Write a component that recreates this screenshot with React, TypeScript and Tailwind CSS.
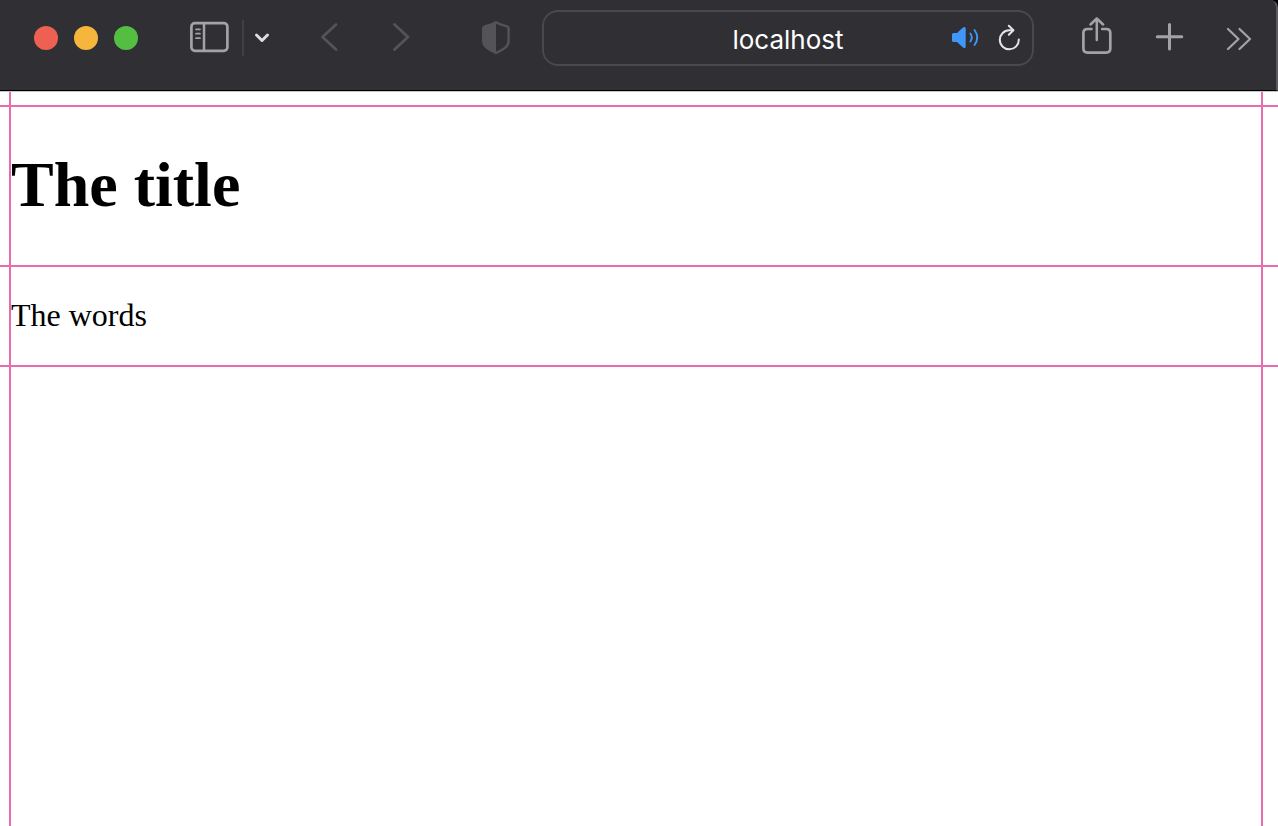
import React from "react";

type IconButtonProps = {
  label: string;
  className?: string;
  children?: React.ReactNode;
};

function IconButton({ label, className = "", children }: IconButtonProps) {
  return (
    <button type="button" aria-label={label} className={`shrink-0 ${className}`}>
      {children}
    </button>
  );
}

const line = {
  fill: "none",
  stroke: "currentColor",
  strokeLinecap: "round" as const,
  strokeLinejoin: "round" as const,
};

function Toolbar() {
  return (
    <header className="flex items-start rounded-tr-lg border-r-2 border-b border-r-[#5b5b5e] border-b-black bg-[#302f34] pt-[10px] pb-6 pl-[34px] text-[#a3a2a7]">
      <div className="flex h-14 shrink-0 items-center gap-4">
        <IconButton label="Close" className="size-6 rounded-full bg-[#ee6152]" />
        <IconButton label="Minimize" className="size-6 rounded-full bg-[#f6b63d]" />
        <IconButton label="Zoom" className="size-6 rounded-full bg-[#54be43]" />
      </div>

      <div className="ml-12 flex h-14 shrink-0 items-center">
        <IconButton label="Show sidebar" className="px-1">
          <svg width="40" height="36" viewBox="0 0 40 36" {...line}>
            <rect x="1.4" y="3.2" width="36" height="27.600" rx="3.500" strokeWidth="2.700" />
            <path d="M14 4v26.500" strokeWidth="2.500" />
            <path d="M6 9.300h4M6 13.700h4M6 18.200h4" strokeWidth="1.700" />
          </svg>
        </IconButton>
        <div className="ml-2 h-9 w-[2px] bg-[#414045]" />
        <IconButton label="Tab groups" className="px-2">
          <svg width="20" height="20" viewBox="0 0 20 20" className="text-[#dddce0]" {...line}>
            <path d="M4.500 7l5.500 5.500l5.500-5.500" strokeWidth="3" />
          </svg>
        </IconButton>
      </div>

      <div className="ml-9 flex h-14 shrink-0 items-center gap-10 text-[#545358]">
        <IconButton label="Back">
          <svg width="32" height="32" viewBox="0 0 32 32" {...line}>
            <path d="M20 2.500L6.500 15L20 27.500" strokeWidth="2.800" />
          </svg>
        </IconButton>
        <IconButton label="Forward">
          <svg width="32" height="32" viewBox="0 0 32 32" {...line}>
            <path d="M6.500 2.500L20 15L6.500 27.500" strokeWidth="2.800" />
          </svg>
        </IconButton>
      </div>

      <div className="ml-[62px] flex h-14 shrink-0 items-center text-[#545358]">
        <IconButton label="Privacy report">
          <svg width="28" height="36" viewBox="0 0 28 36" {...line}>
            <path d="M14 2.200C10 4.800 6 5.500 2.500 6.500Q1.200 7 1.200 8.500V21C1.200 27 7 29.500 14 33C21 29.500 26.600 27 26.600 21V8.500Q26.600 7 25.300 6.500C22 5.500 18 4.800 14 2.200Z" strokeWidth="2.400" />
            <path d="M14 2.200C10 4.800 6 5.500 2.500 6.500Q1.200 7 1.200 8.500V21C1.200 27 7 29.500 14 33Z" fill="currentColor" stroke="none" />
          </svg>
        </IconButton>
      </div>

      <div className="ml-8 flex h-14 min-w-0 flex-1 items-center rounded-2xl border-2 border-[#49484d]">
        <div className="w-20 shrink-0" />
        <input
          type="text"
          aria-label="Address"
          defaultValue="localhost"
          className="h-full min-w-0 flex-1 bg-transparent pt-[2px] text-center font-['Inter','Liberation_Sans',sans-serif] text-[26px] leading-8 text-white outline-none"
        />
        <div className="flex w-20 shrink-0 items-center justify-end gap-4 pr-[10px]">
          <IconButton label="Mute tab">
            <svg width="32" height="28" viewBox="0 0 32 28" className="text-[#3f97fa]" {...line}>
              <path d="M3.500 9H7L13 3.600Q15.700 2 15.700 4.500V22.500Q15.700 25 13 23.400L7 18H3.500Q2 18 2 16.500V10.500Q2 9 3.500 9Z" fill="currentColor" stroke="none" />
              <path d="M20.300 9.500Q23.300 13.500 20.300 17.500M24.500 6Q30 13.500 24.500 21" strokeWidth="1.800" />
            </svg>
          </IconButton>
          <IconButton label="Reload">
            <svg width="24" height="28" viewBox="0 0 24 28" className="text-[#e4e4e6]" {...line}>
              <path d="M15.200 6.300H11.200A9.500 9.500 0 1 0 20.800 15.500" strokeWidth="2" />
              <path d="M10.800 1.800L15.400 6.300L10.800 10.800" strokeWidth="2" />
            </svg>
          </IconButton>
        </div>
      </div>

      <div className="ml-12 flex h-14 shrink-0 items-center gap-10 pr-6">
        <IconButton label="Share">
          <svg width="32" height="42" viewBox="0 0 32 42" {...line}>
            <path d="M9.500 12H5.500Q1.400 12 1.400 16V31.600Q1.400 35.600 5.500 35.600H24.200Q28.300 35.600 28.300 31.600V16Q28.300 12 24.200 12H20.200" strokeWidth="2.700" />
            <path d="M14.800 23V2.500M8.500 7.500L14.800 1.500L21.100 7.500" strokeWidth="2.500" />
          </svg>
        </IconButton>
        <IconButton label="New tab">
          <svg width="32" height="32" viewBox="0 0 32 32" {...line}>
            <path d="M15.500 2.500v24.500M3.300 14.800h24.500" strokeWidth="3" />
          </svg>
        </IconButton>
        <IconButton label="More tools">
          <svg width="26" height="32" viewBox="0 0 26 32" {...line}>
            <path d="M2 7L12.500 17L2 27M13.500 7L24 17L13.500 27" strokeWidth="2.300" />
          </svg>
        </IconButton>
      </div>
    </header>
  );
}

type BandProps = {
  className?: string;
  last?: boolean;
  children?: React.ReactNode;
};

function Band({ className = "", last = false, children }: BandProps) {
  return (
    <div className={`flex border-[#e66cab] pr-[15px] pl-[9px] ${last ? "flex-1" : "border-b-2"}`}>
      <div className={`flex-1 border-x-2 border-[#e66cab] ${className}`}>{children}</div>
    </div>
  );
}

export default function App() {
  return (
    <div className="flex min-h-screen flex-col bg-white">
      <div className="bg-[linear-gradient(to_bottom,black_50%,white_50%)]">
        <Toolbar />
      </div>
      <main className="flex flex-1 flex-col border-t border-[#c4c4c4] font-['Liberation_Serif',serif] text-black">
        <Band className="h-[13px]" />
        <Band className="pt-[42px] pb-11">
          <h1 className="text-[64px] leading-[72px] font-bold">The title</h1>
        </Band>
        <Band className="pt-[30px] pb-8">
          <p className="text-[32px] leading-9">The words</p>
        </Band>
        <Band last />
      </main>
    </div>
  );
}
